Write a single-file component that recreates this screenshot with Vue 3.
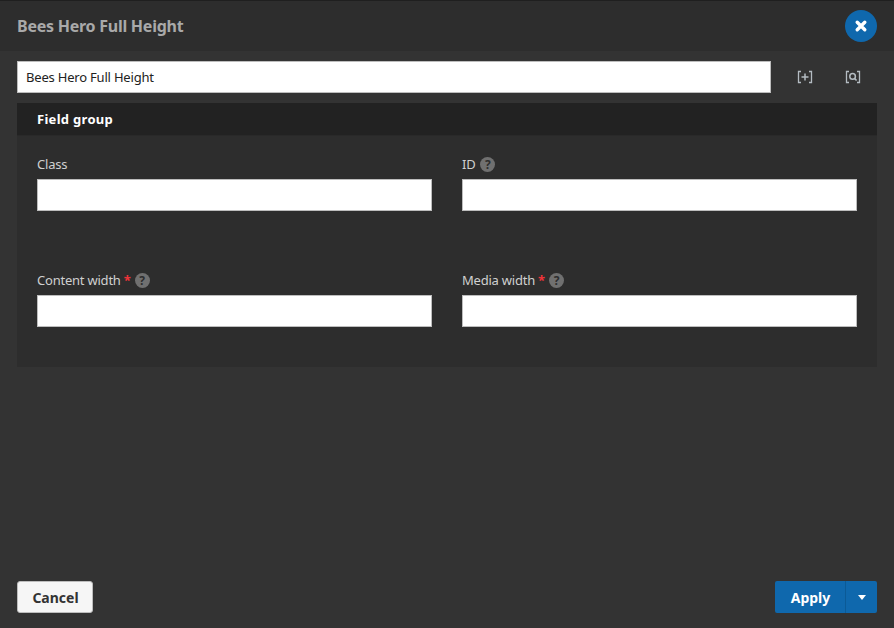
<script setup>
const fields = [
  { label: 'Class', required: false, help: false },
  { label: 'ID', required: false, help: true },
  { label: 'Content width', required: true, help: true },
  { label: 'Media width', required: true, help: true },
];
</script>

<template>
  <div class="dialog">
    <header class="head">
      <h1>Bees Hero Full Height</h1>
      <button class="close" aria-label="Close">
        <svg width="14" height="14" viewBox="0 0 14 14">
          <path d="M3.2 3.2 L10.8 10.8 M10.8 3.2 L3.2 10.8" stroke="#fff" stroke-width="3.4" stroke-linecap="round" />
        </svg>
      </button>
    </header>

    <main class="body">
      <div class="title-row">
        <input class="title-input" type="text" value="Bees Hero Full Height" />
        <div class="tools">
          <svg width="16" height="14" viewBox="0 0 16 14" fill="none" stroke="#b4bcc2" stroke-width="1.3">
            <path d="M4 1.5 H1.5 V12.5 H4 M12 1.5 H14.5 V12.5 H12" />
            <path d="M8 3.5 V10.5 M4.5 7 H11.5" stroke-width="1.5" />
          </svg>
          <svg width="16" height="14" viewBox="0 0 16 14" fill="none" stroke="#b4bcc2" stroke-width="1.3">
            <path d="M4 1.5 H1.5 V12.5 H4 M12 1.5 H14.5 V12.5 H12" />
            <circle cx="7.6" cy="6.4" r="2.8" stroke-width="1.5" />
            <path d="M9.6 8.5 L11.6 10.5" stroke-width="1.7" />
          </svg>
        </div>
      </div>

      <section class="group">
        <h2>Field group</h2>
        <div class="grid">
          <div v-for="f in fields" :key="f.label" class="field">
            <label>
              <span>{{ f.label }}</span>
              <span v-if="f.required" class="req">*</span>
              <span v-if="f.help" class="help">?</span>
            </label>
            <input type="text" />
          </div>
        </div>
      </section>
    </main>

    <footer class="foot">
      <button class="cancel">Cancel</button>
      <div class="apply">
        <button class="apply-main">Apply</button>
        <button class="apply-more" aria-label="More"><span class="caret"></span></button>
      </div>
    </footer>
  </div>
</template>

<style>
html, body {
  margin: 0;
  background: #333;
}
</style>

<style scoped>
.dialog {
  width: 894px;
  height: 628px;
  display: flex;
  flex-direction: column;
  background: #333;
  color: #d8d8d8;
  font-family: "Noto Sans", sans-serif;
  font-size: 13px;
  box-sizing: border-box;
}
.head {
  height: 51px;
  box-sizing: border-box;
  border-top: 1px solid #1f1f1f;
  background: #2d2d2d;
  padding: 0 17px;
  display: flex;
  align-items: center;
  justify-content: space-between;
}
.head h1 {
  margin: 0;
  font-size: 16px;
  font-weight: 700;
  letter-spacing: -0.25px;
  color: #a9a9a9;
}
.close {
  width: 32px;
  height: 32px;
  border: none;
  border-radius: 50%;
  background: #0f68ad;
  padding: 0;
  display: flex;
  align-items: center;
  justify-content: center;
}
.body {
  flex: 1;
  padding: 10px 17px 0;
}
.title-row {
  display: flex;
  align-items: center;
}
input {
  box-sizing: border-box;
  height: 32px;
  border: 1px solid #bdbdbd;
  background: #fff;
  font-family: inherit;
  font-size: 13px;
  letter-spacing: -0.2px;
  color: #222;
  padding: 0 8px;
  outline: none;
  border-radius: 0;
}
.title-input {
  width: 754px;
}
.tools {
  display: flex;
  gap: 32px;
  margin-left: 26px;
}
.group {
  margin-top: 10px;
  background: #2d2d2d;
  height: 264px;
}
.group h2 {
  margin: 0;
  height: 32px;
  line-height: 32px;
  padding: 0 20px;
  background: #222;
  border-bottom: 1px solid #292929;
  font-size: 13px;
  font-weight: 700;
  letter-spacing: 0.3px;
  color: #fff;
}
.grid {
  display: grid;
  grid-template-columns: 395px 395px;
  column-gap: 30px;
  row-gap: 61px;
  padding: 20px 20px 0;
}
.field {
  display: flex;
  flex-direction: column;
}
.field label {
  height: 23px;
  line-height: 17px;
  display: flex;
  align-items: flex-start;
  color: #d0d0d0;
  letter-spacing: -0.22px;
  gap: 3px;
}
.field input {
  width: 395px;
}
.req {
  width: 6px;
  color: #ee3338;
  font-weight: 700;
}
.help {
  width: 15px;
  height: 15px;
  margin: 1px 0 0 2px;
  border-radius: 50%;
  background: #707070;
  color: #2d2d2d;
  font-size: 12px;
  font-weight: 700;
  line-height: 15px;
  letter-spacing: 0;
  text-align: center;
}
.foot {
  display: flex;
  justify-content: space-between;
  padding: 0 17px 15px;
}
.foot button {
  font-family: inherit;
  font-size: 14px;
  font-weight: 700;
  height: 32px;
}
.cancel {
  width: 76px;
  background: #f6f6f6;
  color: #333;
  border: 1px solid #bdbdbd;
  border-radius: 3px;
  padding: 0 0 0 1px;
}
.apply {
  display: flex;
}
.apply-main {
  width: 71px;
  padding: 0 0 0 1px;
  border: none;
  border-right: 1px solid #0b5a96;
  background: #0f68ad;
  color: #fff;
  border-radius: 2px 0 0 2px;
}
.apply-more {
  width: 31px;
  padding: 0;
  border: none;
  background: #0f68ad;
  border-radius: 0 2px 2px 0;
  display: flex;
  align-items: center;
  justify-content: center;
}
.caret {
  width: 0;
  height: 0;
  border-left: 4.5px solid transparent;
  border-right: 4.5px solid transparent;
  border-top: 5px solid #fff;
}
</style>
